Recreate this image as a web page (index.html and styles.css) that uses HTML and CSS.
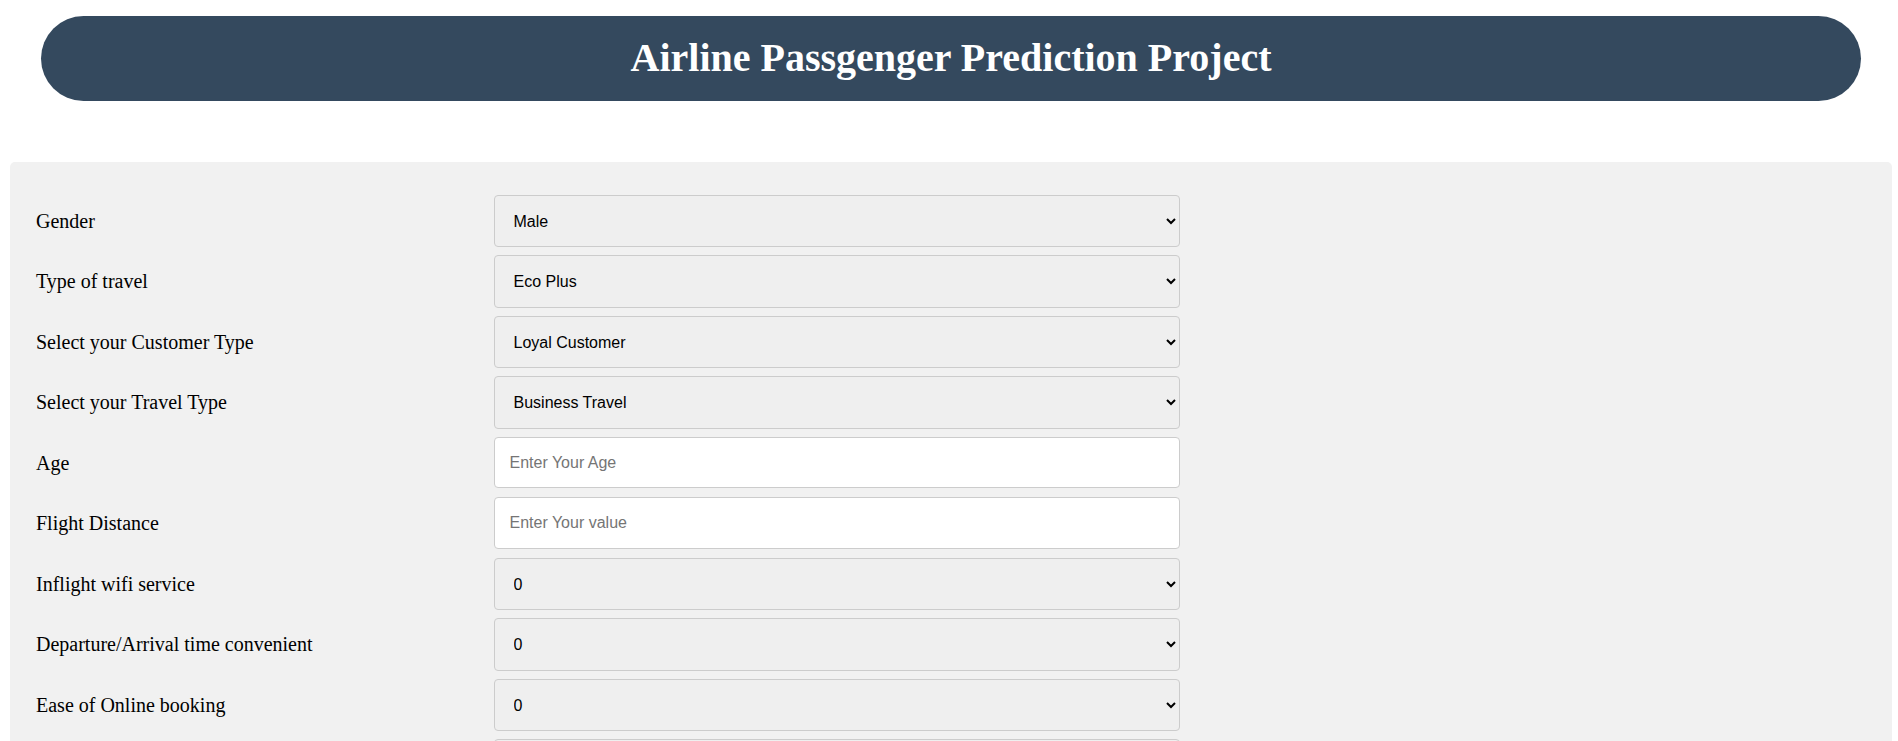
FILE: index.html
```html
<!DOCTYPE html>
<html lang="en">
<head>
<meta charset="utf-8">
<title>Airline Passenger Prediction</title>
<link rel="stylesheet" href="styles.css">
</head>
<body>
<div class="page">
  <h1 class="banner">Airline Passgenger Prediction Project</h1>
  <form class="panel">
    <div class="row">
      <label class="label">Gender</label>
      <select class="field"><option>Male</option><option>Female</option></select>
    </div>
    <div class="row">
      <label class="label">Type of travel</label>
      <select class="field"><option>Eco Plus</option><option>Eco</option><option>Business</option></select>
    </div>
    <div class="row">
      <label class="label">Select your Customer Type</label>
      <select class="field"><option>Loyal Customer</option><option>Disloyal Customer</option></select>
    </div>
    <div class="row">
      <label class="label">Select your Travel Type</label>
      <select class="field"><option>Business Travel</option><option>Personal Travel</option></select>
    </div>
    <div class="row">
      <label class="label">Age</label>
      <input class="field input" type="text" placeholder="Enter Your Age">
    </div>
    <div class="row">
      <label class="label">Flight Distance</label>
      <input class="field input" type="text" placeholder="Enter Your value">
    </div>
    <div class="row">
      <label class="label">Inflight wifi service</label>
      <select class="field"><option>0</option><option>1</option><option>2</option><option>3</option><option>4</option><option>5</option></select>
    </div>
    <div class="row">
      <label class="label">Departure/Arrival time convenient</label>
      <select class="field"><option>0</option><option>1</option><option>2</option><option>3</option><option>4</option><option>5</option></select>
    </div>
    <div class="row">
      <label class="label">Ease of Online booking</label>
      <select class="field"><option>0</option><option>1</option><option>2</option><option>3</option><option>4</option><option>5</option></select>
    </div>
    <div class="row">
      <label class="label">Gate location</label>
      <select class="field"><option>0</option><option>1</option><option>2</option><option>3</option><option>4</option><option>5</option></select>
    </div>
    <div class="row">
      <label class="label">Food and drink</label>
      <select class="field"><option>0</option><option>1</option><option>2</option><option>3</option><option>4</option><option>5</option></select>
    </div>
  </form>
</div>
</body>
</html>
```
FILE: styles.css
```css
html, body {
  margin: 0;
  padding: 0;
  background: #ffffff;
}

body {
  font-family: "Liberation Serif", "Times New Roman", serif;
  color: #000;
}

.page {
  padding: 16px 6px 0 10px;
}

.banner {
  margin: 0 31px;
  background: #34495e;
  color: #ffffff;
  border-radius: 43px;
  text-align: center;
  font-family: "Liberation Serif", "Times New Roman", serif;
  font-weight: bold;
  font-size: 40px;
  line-height: 46px;
  padding: 19.3px 0;
}

.panel {
  margin-top: 61.6px;
  background: #f1f1f1;
  border-radius: 5px;
  padding: 24.7px 26px 20px 26px;
}

.row {
  display: grid;
  grid-template-columns: 25% 37.5%;
  grid-template-rows: 52.5px;
  align-items: center;
  margin-top: 8px;
}

.label {
  font-size: 20px;
  font-family: "Liberation Serif", "Times New Roman", serif;
}

.field {
  box-sizing: border-box;
  width: 100%;
  height: 52.5px;
  align-self: start;
  font-family: "Liberation Sans", Arial, sans-serif;
  font-size: 16px;
  color: #000;
  background-color: #efefef;
  border: 1px solid #cccccc;
  border-radius: 4px;
  padding: 0 4px 0 15px;
  margin: 0;
}

.input {
  height: 51.3px;
  background-color: #ffffff;
  padding: 0 15px;
}

.input::placeholder {
  color: #757575;
}
```
